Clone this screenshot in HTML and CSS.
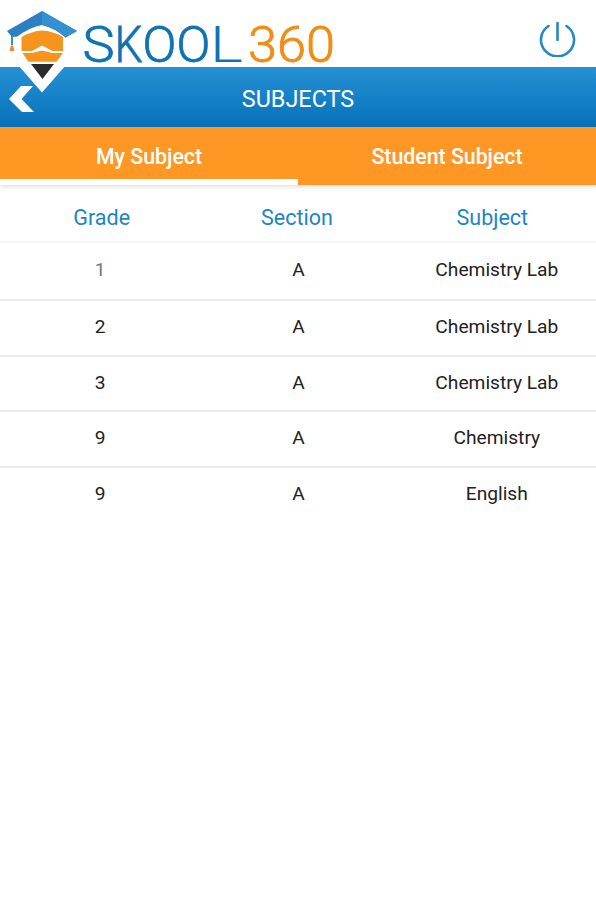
FILE: index.html
```html
<!DOCTYPE html>
<html lang="en">

<head>
    <meta charset="UTF-8">
    <meta name="viewport" content="width=device-width, initial-scale=1.0">
    <title>Skool 360 - Subjects</title>
    <link rel="stylesheet" href="styles.css">
</head>

<body>
    <header class="header">
        <svg class="logo" viewBox="0 0 340 94" role="img" aria-label="Skool 360">
            <!-- Pin with graduation cap -->
            <path d="M18 65L42 92.500L66 65V40H18z" fill="#fff" />
            <path d="M21.500 37Q32 31 42 30.500Q53 31 63 37V51H52.500L42 45.500L32 51H21.500z" fill="#f7941e" />
            <path d="M22.500 53H32L42 50.500L52.500 53H63L56.500 61.700H28.500z" fill="#f7941e" />
            <path d="M31 64H54L42.500 79z" fill="#2b2b2d" />
            <path d="M7 31L42 11L77 31L65.500 37.500Q55 28 42 25Q28 28 17.500 36.500L12 37z" fill="#2a80c1" />
            <path d="M42 11L77 31L65.500 37.500Q55 28 42 25z" fill="#3590d0" />
            <path d="M12 34V45" fill="none" stroke="#2a80c1" stroke-width="1.800" />
            <path d="M11 45.500H13L14.500 51H9.500z" fill="#e8893a" />
            <text class="logo-name" y="62"><tspan x="82.500" textLength="32" lengthAdjust="spacingAndGlyphs">S</tspan><tspan x="114.500" textLength="28" lengthAdjust="spacingAndGlyphs">K</tspan><tspan x="142.500">O</tspan><tspan x="176.500">O</tspan><tspan class="logo-wide" x="210" textLength="33" lengthAdjust="spacingAndGlyphs">L</tspan></text>
            <text class="logo-number" x="248" y="62" textLength="87" lengthAdjust="spacingAndGlyphs">360</text>
        </svg>
        <button class="power-button" aria-label="Log out">
            <svg width="38" height="38" viewBox="0 0 38 38">
                <path d="M9.500 7A16.500 16.500 0 1 0 27.500 7M18.500 4V21" />
            </svg>
        </button>
    </header>

    <div class="title-bar">
        <button class="back-button" aria-label="Back">
            <svg width="26" height="26" viewBox="0 0 26 26">
                <path d="M12 0H24L12.500 13L25 26H13L0 13z" />
            </svg>
        </button>
        <h1>SUBJECTS</h1>
    </div>

    <nav class="tabs">
        <button class="tab active">My Subject</button>
        <button class="tab">Student Subject</button>
    </nav>

    <main class="subjects">
        <div class="table-head">
            <span>Grade</span>
            <span>Section</span>
            <span>Subject</span>
        </div>
        <div class="table-row first">
            <span class="muted">1</span>
            <span>A</span>
            <span>Chemistry Lab</span>
        </div>
        <div class="table-row">
            <span>2</span>
            <span>A</span>
            <span>Chemistry Lab</span>
        </div>
        <div class="table-row">
            <span>3</span>
            <span>A</span>
            <span>Chemistry Lab</span>
        </div>
        <div class="table-row">
            <span>9</span>
            <span>A</span>
            <span>Chemistry</span>
        </div>
        <div class="table-row">
            <span>9</span>
            <span>A</span>
            <span>English</span>
        </div>
    </main>
</body>

</html>
```

FILE: styles.css
```css
:root {
    --blue: #1c86c5;
    --blue-dark: #0671b8;
    --orange: #ff9724;
    --white: #ffffff;
    --line: #ececec;
    --text: #222;
}

* {
    margin: 0;
    padding: 0;
    box-sizing: border-box;
}

body {
    min-height: 100vh;
    background: var(--white);
    color: var(--text);
    font-family: Roboto, 'Liberation Sans', sans-serif;
    overflow-x: hidden;
}

button {
    border: none;
    background: none;
    color: inherit;
    font-family: inherit;
    cursor: pointer;
}

svg {
    display: block;
}

/* Header */
.header {
    display: flex;
    justify-content: space-between;
    align-items: flex-start;
    height: 67px;
    padding-right: 19px;
}

/* The pin hangs down over the title bar */
.logo {
    position: relative;
    z-index: 2;
    width: 340px;
    height: 94px;
    flex-shrink: 0;
    pointer-events: none;
}

.logo-name,
.logo-number {
    font-size: 50px;
    font-weight: 300;
    stroke-width: 0.8px;
}

.logo-name {
    fill: #0e73b0;
    stroke: #0e73b0;
}

.logo-wide {
    stroke: none;
}

.logo-number {
    fill: #f28c13;
    stroke: #f28c13;
}

.power-button {
    margin-top: 19px;
}

.power-button path {
    fill: none;
    stroke: #2787c3;
    stroke-width: 2.6px;
    stroke-linecap: round;
}

/* Title bar */
.title-bar {
    display: grid;
    grid-template-columns: 60px 1fr 60px;
    align-items: center;
    height: 60px;
    padding-top: 3px;
    background: linear-gradient(#2591d4, var(--blue-dark));
    color: var(--white);
}

.title-bar h1 {
    padding-top: 1px;
    font-size: 23.4px;
    font-weight: 400;
    text-align: center;
}

.back-button {
    padding-left: 9px;
}

.back-button path {
    fill: var(--white);
}

/* Tabs */
.tabs {
    display: flex;
    height: 58px;
    background: var(--orange);
    color: var(--white);
    box-shadow: 0 2px 4px rgba(0, 0, 0, 0.12);
}

.tab {
    flex: 1;
    padding-top: 7px;
    border-bottom: 6px solid transparent;
    font-size: 21.3px;
    font-weight: 500;
}

.tab.active {
    border-bottom-color: var(--white);
}

/* Subject list */
.table-head,
.table-row {
    display: grid;
    grid-template-columns: repeat(3, 1fr);
    align-items: center;
    text-align: center;
}

.table-head {
    height: 58px;
    padding: 8px 6px 0 4px;
    border-bottom: 2px solid #f5f5f5;
    color: var(--blue);
    font-size: 21.5px;
}

.table-row {
    height: 55.7px;
    padding: 0 0 3px 1px;
    border-bottom: 2px solid var(--line);
    font-size: 19.2px;
}

.table-row.first {
    height: 58px;
    padding-bottom: 4px;
}

.table-row:last-child {
    padding-bottom: 2px;
    border-bottom-color: transparent;
}

.table-row .muted {
    color: #777;
}
```
